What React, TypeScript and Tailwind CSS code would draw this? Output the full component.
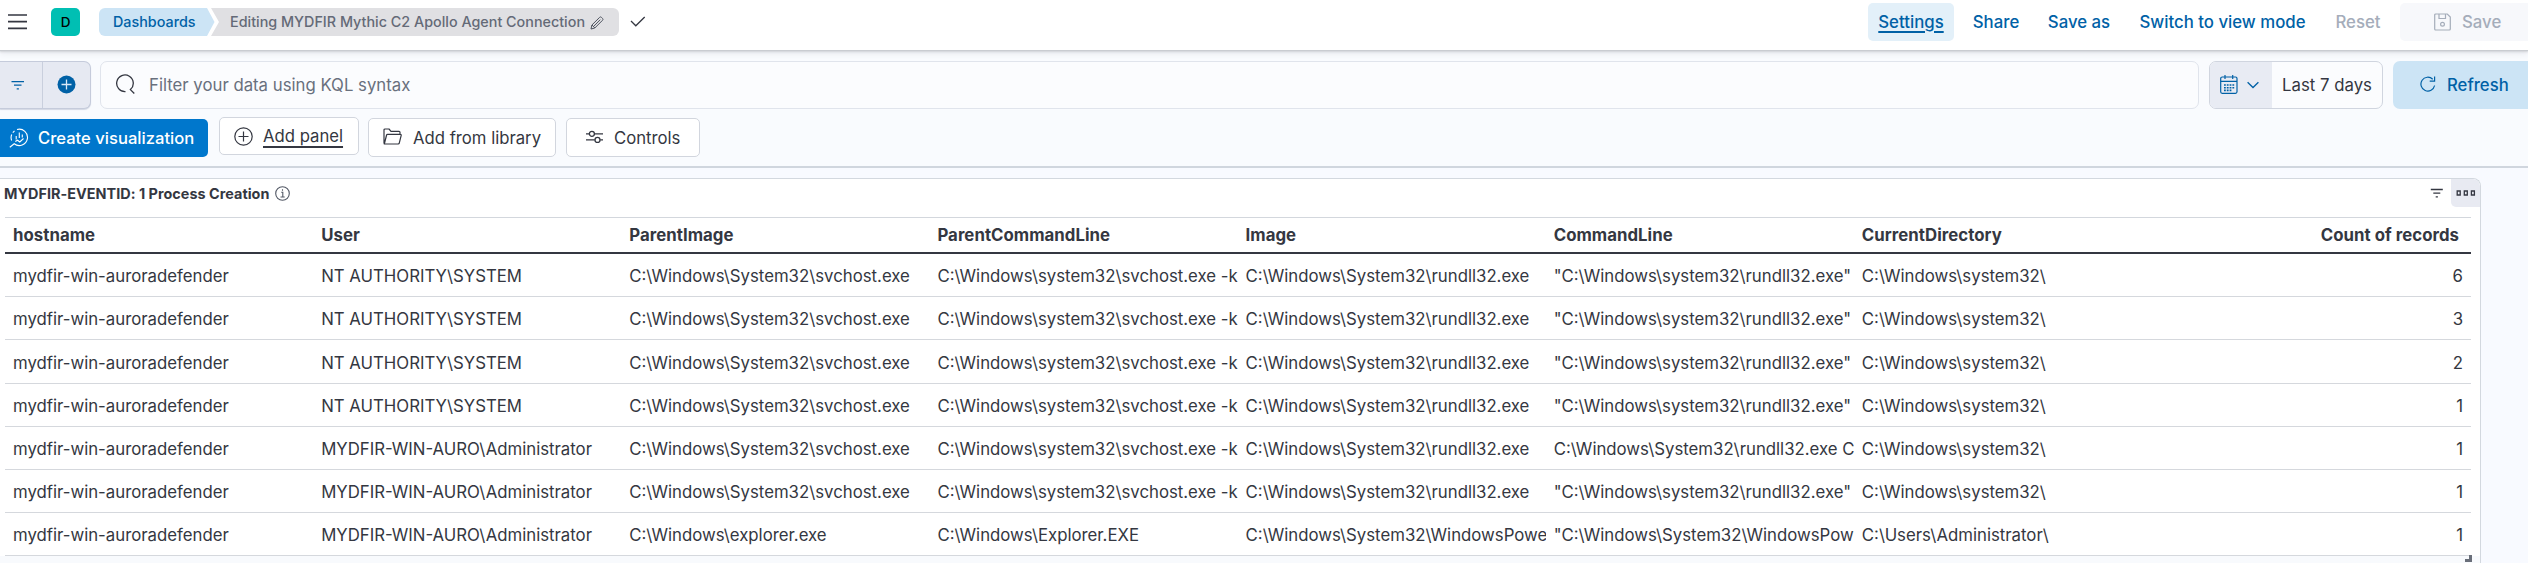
import type { ReactNode } from "react";

type IconProps = { w: number; h: number; className?: string; children: ReactNode; sw?: number };

function Icon({ w, h, className = "", children, sw = 1.2 }: IconProps) {
  return (
    <svg
      width={w}
      height={h}
      viewBox={`0 0 ${w} ${h}`}
      fill="none"
      stroke="currentColor"
      strokeWidth={sw}
      className={`shrink-0 ${className}`}
    >
      {children}
    </svg>
  );
}

const columns = ["hostname", "User", "ParentImage", "ParentCommandLine", "Image", "CommandLine", "CurrentDirectory"];

const host = "mydfir-win-auroradefender";
const system = "NT AUTHORITY\\SYSTEM";
const admin = "MYDFIR-WIN-AURO\\Administrator";
const svchost = "C:\\Windows\\System32\\svchost.exe";
const svchostCmd = "C:\\Windows\\system32\\svchost.exe -k";
const rundll = "C:\\Windows\\System32\\rundll32.exe";
const rundllCmd = '"C:\\Windows\\system32\\rundll32.exe"';
const sysDir = "C:\\Windows\\system32\\";

const rows: string[][] = [
  [host, system, svchost, svchostCmd, rundll, rundllCmd, sysDir, "6"],
  [host, system, svchost, svchostCmd, rundll, rundllCmd, sysDir, "3"],
  [host, system, svchost, svchostCmd, rundll, rundllCmd, sysDir, "2"],
  [host, system, svchost, svchostCmd, rundll, rundllCmd, sysDir, "1"],
  [host, admin, svchost, svchostCmd, rundll, "C:\\Windows\\System32\\rundll32.exe C", sysDir, "1"],
  [host, admin, svchost, svchostCmd, rundll, rundllCmd, sysDir, "1"],
  [
    host,
    admin,
    "C:\\Windows\\explorer.exe",
    "C:\\Windows\\Explorer.EXE",
    "C:\\Windows\\System32\\WindowsPowe",
    '"C:\\Windows\\System32\\WindowsPow',
    "C:\\Users\\Administrator\\",
    "1",
  ],
];

const grid = "grid grid-cols-[repeat(7,308.15px)_1fr]";

function TopBar() {
  return (
    <header className="relative z-10 flex h-[50px] items-start bg-white shadow-[0_1px_1px_#c9ccd1,0_2px_2px_#d3d5da,0_4px_6px_#e9ebf0]">
      <Icon w={20} h={16} className="mt-[14px] ml-[8px] text-[#343741]" sw={1.7}>
        <path d="M0 1h19M0 7.7h19M0 14.3h19" />
      </Icon>
      <div className="mt-[8px] ml-[23px] flex h-[28px] w-[29px] items-center justify-center rounded-[5px] bg-[#00bfb3] text-[13.500px] font-medium text-black">
        D
      </div>
      <nav className="mt-[8px] ml-[19px] flex h-[28px] text-[14.35px] font-medium">
        <div className="flex w-[116px] items-center rounded-l-[6px] bg-[#cce4f5] pl-[14px] text-[#0061a6] [clip-path:polygon(0_0,108px_0,115.5px_50%,108px_100%,0_100%)]">
          Dashboards
        </div>
        <div className="-ml-[4px] flex w-[408px] items-center rounded-r-[6px] bg-[#e0e0e3] pl-[19px] text-[#646a77] [clip-path:polygon(0_0,100%_0,100%_100%,0_100%,8px_50%)]">
          <span className="whitespace-nowrap">Editing MYDFIR Mythic C2 Apollo Agent Connection</span>
          <Icon w={14} h={14} className="mt-px ml-[5px] text-[#4d525e]" sw={1}>
            <path
              d="M1 13l.9-4L9.600 1.400a1.300 1.300 0 0 1 1.900 0l1 1a1.300 1.300 0 0 1 0 1.900L4.800 12zM2 9l2.800 2.900M3.600 10.400l6.600-6.700"
              strokeLinejoin="round"
            />
          </Icon>
        </div>
      </nav>
      <Icon w={16} h={12} className="mt-[16px] ml-[11px] text-[#343741]" sw={1.3}>
        <path d="M1 5l4.800 4.800L14.700 1" />
      </Icon>
      <div className="mt-[3px] ml-auto flex gap-[9px] text-[16.8px] font-medium text-[#0061a6]">
        <div className="flex h-[38px] w-[86px] items-center justify-center rounded-[5px] bg-[#e3f0f9] underline decoration-[1.5px] underline-offset-[3px]">
          Settings
        </div>
        <div className="flex h-[38px] w-[66px] items-center justify-center">Share</div>
        <div className="flex h-[38px] w-[82px] items-center justify-center">Save as</div>
        <div className="flex h-[38px] w-[187px] items-center justify-center">Switch to view mode</div>
        <div className="flex h-[38px] w-[66px] items-center justify-center text-[#a5adba]">Reset</div>
        <div className="flex h-[38px] w-[128px] items-center rounded-l-[5px] bg-[#f7f8fb] pl-[34px] text-[#a5adba]">
          <Icon w={17} h={18} sw={1.2}>
            <path d="M.7 2a1 1 0 0 1 1-1h11.600l3 3V16a1 1 0 0 1-1 1H1.700a1 1 0 0 1-1-1zM5 1v4.500h6.500V1" />
            <circle cx="8.500" cy="11.300" r="1.900" />
          </Icon>
          <span className="ml-[11px]">Save</span>
        </div>
      </div>
    </header>
  );
}

function QueryBar() {
  return (
    <div className="flex h-[48px] text-[16.8px]">
      <div className="flex w-[91px] rounded-r-[7px] border border-l-0 border-[#c5cbdb] bg-[#e6e9f2] text-[#0061a6] shadow-[0_1px_1px_#d3d8e4]">
        <div className="flex w-[42.500px] items-center border-r border-[#c9cfdd] pl-[11px]">
          <Icon w={14} h={10} sw={1.3}>
            <path d="M.5 1.600h12.500M3 5.200h7.500M5.700 8.800h2.200" />
          </Icon>
        </div>
        <div className="flex flex-1 items-center pb-[2px] pl-[14px]">
          <Icon w={19} h={19} sw={1.3}>
            <circle cx="9.500" cy="9.500" r="9" fill="currentColor" stroke="none" />
            <path d="M9.500 4.500v10M4.500 9.500h10" stroke="#dbe9f6" />
          </Icon>
        </div>
      </div>
      <div className="ml-[9px] flex w-[2099px] items-center rounded-[7px] border border-[#e0e4ec] bg-[#fbfcfe] pl-[14px] text-[#69707d]">
        <Icon w={21} h={20} className="-mt-[2px] text-[#343741]" sw={1.3}>
          <path d="M10.500 17.600a8.300 8.300 0 1 1 4.900-2L19.300 19.500" />
        </Icon>
        <span className="ml-[13px] text-[16.750px]">Filter your data using KQL syntax</span>
      </div>
      <div className="ml-[10px] flex w-[174px] overflow-hidden rounded-[7px] border border-[#d0d5df] bg-[#fbfcfe]">
        <div className="flex w-[62px] items-center bg-[#e8ebf3] pl-[10px] text-[#0061a6]">
          <Icon w={18} h={19} className="-mt-px" sw={1.2}>
            <rect x=".7" y="2" width="16.300" height="16.300" rx="1.500" />
            <path d="M.7 6.300h16.300M5 0v4M12.700 0v4" />
            <path d="M4 10h10.500M4 12.700h10.500M4 15.400h7.500" strokeWidth="1.600" strokeDasharray="1.800 1" />
          </Icon>
          <Icon w={12} h={8} className="ml-[9px]" sw={1.3}>
            <path d="M.6 1.200L6 6.500l5.400-5.300" />
          </Icon>
        </div>
        <div className="flex flex-1 items-center pl-[10px] text-[#343741]">Last 7 days</div>
      </div>
      <div className="ml-[10px] flex flex-1 items-center rounded-l-[7px] bg-[#cce4f5] pl-[27px] font-medium text-[#0061a6]">
        <Icon w={16} h={17} className="-mt-[2px]" sw={1.2}>
          <path d="M12.700 3.200A6.900 6.900 0 1 0 14.600 9.500M14.600 .5V5.200H9.700" />
        </Icon>
        <span className="ml-[11px] text-[16.700px]">Refresh</span>
      </div>
    </div>
  );
}

function Toolbar() {
  const box = "flex items-center rounded-[5px] border border-[#d2d6de] bg-white";
  return (
    <div className="mt-[8px] flex h-[41px] items-start text-[16.700px] text-[#343741]">
      <div className="mt-[2px] flex h-[37.500px] w-[208px] items-center rounded-r-[5px] bg-[#0077cc] pl-[9px] font-medium text-white">
        <Icon w={20} h={20} sw={1.1}>
          <path d="M8 1.500A8.200 8.200 0 1 1 5.200 15.800L.8 19.300M2.600 12.500A8.200 8.200 0 0 1 2.700 6.500M3.800 4.600l1.700-1.700" />
          <path d="M7.200 8v3.500M10.300 4.500v5.500M13.300 6.500v3M6.300 13.500l2.200-1.300 2.300 1.800 3.700-3.500" />
        </Icon>
        <span className="ml-[9px] text-[16.600px]">Create visualization</span>
      </div>
      <div className={`${box} ml-[11px] h-[38px] w-[140px] pl-[14px]`}>
        <Icon w={19} h={19} sw={1.2}>
          <circle cx="9.500" cy="9.500" r="8.700" />
          <path d="M9.500 4.500v10M4.500 9.500h10" />
        </Icon>
        <span className="ml-[10px] underline decoration-[1.500px] underline-offset-[4px]">Add panel</span>
      </div>
      <div className={`${box} mt-px ml-[9px] h-[39px] w-[188px] pl-[14px]`}>
        <Icon w={19} h={17} className="-mt-[2px]" sw={1.2}>
          <path
            d="M1 15.500V2a1 1 0 0 1 1-1h4l2 2.300h8a1 1 0 0 1 1 1v2M1.300 16L3.600 7a1 1 0 0 1 1-.7h12.800a.8.8 0 0 1 .8 1l-2 8a1 1 0 0 1-1 .7H1.300z"
            strokeLinejoin="round"
          />
        </Icon>
        <span className="ml-[11px]">Add from library</span>
      </div>
      <div className={`${box} mt-px ml-[10px] h-[39px] w-[134px] pl-[19px]`}>
        <Icon w={18} h={14} className="-mt-px" sw={1.3}>
          <path d="M0 3.800h3.200M8.600 3.800h8.400M0 9.900h8.800M14.200 9.900H17" />
          <circle cx="5.900" cy="3.800" r="2.500" />
          <circle cx="11.500" cy="9.900" r="2.500" />
        </Icon>
        <span className="ml-[10px]">Controls</span>
      </div>
    </div>
  );
}

function Panel() {
  return (
    <section className="relative mt-[10px] h-[400px] w-[2481px] rounded-tr-[8px] border-t border-r border-[#d3d8df] bg-[#f8fafd]">
      <div className="h-[377px] rounded-tr-[8px] bg-white pl-[5px] text-[#343741]">
        <div className="flex h-[38px] items-start">
          <h2 className="mt-[5px] -ml-px text-[14.400px] leading-[19px] font-bold tracking-[0.03px]">
            MYDFIR-EVENTID: 1 Process Creation
          </h2>
          <Icon w={15} h={15} className="mt-[7px] ml-[6px] text-[#535966]" sw={1.1}>
            <circle cx="7.500" cy="7.500" r="6.800" />
            <path d="M6.200 6.300h1.600v4.500M5.500 11h4.200M7.500 3.300v1.500" />
          </Icon>
          <Icon w={14} h={11} className="mt-[9px] ml-auto" sw={1.3}>
            <path d="M.8 1.500h12M3.300 5.200h7M5.700 8.900h2.200" />
          </Icon>
          <div className="ml-[7px] flex h-[28px] w-[29px] items-center justify-center rounded-tr-[7px] rounded-bl-[5px] bg-[#e8eaf2]">
            <Icon w={20} h={6} sw={1.3}>
              <path d="M1.200 1h3v4h-3zM8.300 1h3v4h-3zM15.400 1h3v4h-3z" />
            </Icon>
          </div>
        </div>
        <div className="w-[2466px]">
          <div
            className={`${grid} h-[37px] items-center border-t border-b-2 border-t-[#d3d7dd] border-b-[#343741] text-[16.800px] font-bold tracking-[0.04px]`}
          >
            {columns.map((c) => (
              <div key={c} className="pl-[8px]">
                {c}
              </div>
            ))}
            <div className="pr-[12px] text-right">Count of records</div>
          </div>
          {rows.map((r, i) => (
            <div
              key={i}
              className={`${grid} ${i === 2 ? "h-[44px]" : "h-[43px]"} items-center border-b border-[#d5d8dd] text-[16.780px] whitespace-nowrap`}
            >
              {r.map((cell, j) => (
                <div key={j} className={j === 7 ? "pt-[2px] pr-[8px] text-right" : "overflow-hidden pt-[2px] pl-[8px]"}>
                  {cell}
                </div>
              ))}
            </div>
          ))}
        </div>
      </div>
      <span className="absolute top-[376px] right-[8px] h-[7px] w-[7px] border-r-[3px] border-b-[3px] border-[#6a6f7a]" />
    </section>
  );
}

export default function App() {
  return (
    <div className="h-[563px] w-[2528px] overflow-hidden bg-[#f8faff] font-['Inter',sans-serif] leading-[24px]">
      <TopBar />
      <div className="h-[118px] border-b-2 border-[#d0d6de] bg-[#f9fbfe] pt-[11px]">
        <QueryBar />
        <Toolbar />
      </div>
      <Panel />
    </div>
  );
}
